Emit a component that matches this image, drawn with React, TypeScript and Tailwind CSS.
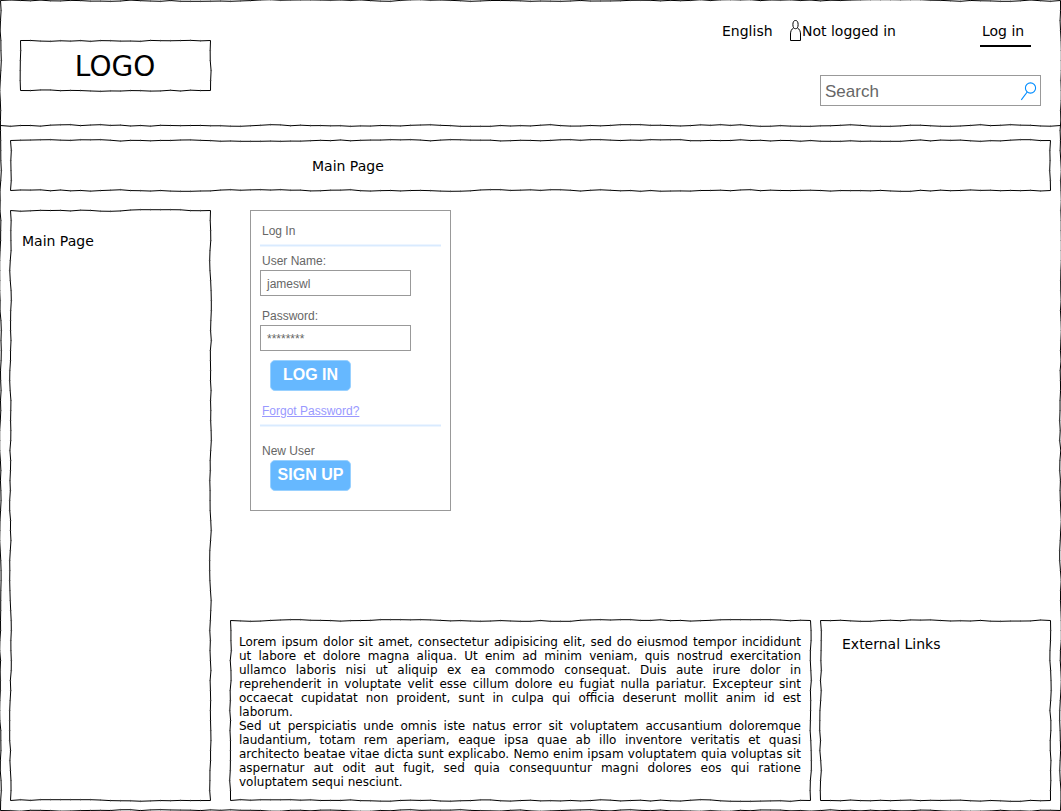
import type { ReactNode } from 'react';

type SketchProps = { width: number; height: number; seed: number; lineAt?: number };

// Offsets follow a damped random walk so neighbouring points stay close together.
function wobble(seed: number) {
  let s = seed * 7919 + 13;
  let last = 0;
  return () => {
    s = (s * 16807) % 2147483647;
    const step = ((s / 2147483647) * 2 - 1) * 0.75;
    last = Math.max(-0.8, Math.min(0.8, last * 0.6 + step));
    return last;
  };
}

function line(length: number, vertical: boolean, fixed: number, rnd: () => number) {
  const points: string[] = [];
  const ticks: string[] = [];
  for (let p = 0; p <= length; p += 10) {
    const end = p === 0 || p >= length;
    const at = p + 0.5;
    const off = fixed + 0.5 + (end ? 0 : rnd());
    points.push(vertical ? `${off} ${at}` : `${at} ${off}`);
    if (!end) ticks.push(vertical ? `M${off - 1} ${at}h2` : `M${at} ${off - 1}v2`);
  }
  if (length % 10) {
    points.push(vertical ? `${fixed + 0.5} ${length + 0.5}` : `${length + 0.5} ${fixed + 0.5}`);
  }
  return { d: `M${points.join('L')}`, ticks: ticks.join('') };
}

function Sketch({ width, height, seed, lineAt }: SketchProps) {
  const rnd = wobble(seed);
  const lines = [
    line(width, false, 0, rnd),
    line(height, true, width, rnd),
    line(width, false, height, rnd),
    line(height, true, 0, rnd),
  ];
  if (lineAt) lines.push(line(width, false, lineAt, rnd));
  return (
    <svg
      className="pointer-events-none absolute top-0 left-0 overflow-visible"
      width={width + 1}
      height={height + 1}
      fill="none"
      stroke="black"
    >
      {lines.map((l, i) => (
        <g key={i}>
          <path d={l.d} />
          <path d={l.ticks} strokeOpacity="0.3" />
        </g>
      ))}
    </svg>
  );
}

function Field({ label, value }: { label: string; value: string }) {
  return (
    <div className="h-[55px]">
      <div className="h-4 pl-0.5">{label}</div>
      <div className="flex h-[26px] w-[151px] items-center border border-[#999] pt-px pl-1.5">{value}</div>
    </div>
  );
}

function Divider() {
  return <div className="h-[3px] w-[181px] border-y border-[#edf5ff] bg-[#d9ebff]" />;
}

function Button({ children }: { children: ReactNode }) {
  return (
    <button className="ml-2.5 flex h-[31px] w-[81px] items-center justify-center rounded-[5px] border border-[#99d1ff] bg-[#66b8ff] pb-px text-base leading-none font-bold text-white">
      {children}
    </button>
  );
}

const lorem = [
  'Lorem ipsum dolor sit amet, consectetur adipisicing elit, sed do eiusmod tempor incididunt',
  'ut labore et dolore magna aliqua. Ut enim ad minim veniam, quis nostrud exercitation',
  'ullamco laboris nisi ut aliquip ex ea commodo consequat. Duis aute irure dolor in',
  'reprehenderit in voluptate velit esse cillum dolore eu fugiat nulla pariatur. Excepteur sint',
  'occaecat cupidatat non proident, sunt in culpa qui officia deserunt mollit anim id est',
  'laborum.',
  'Sed ut perspiciatis unde omnis iste natus error sit voluptatem accusantium doloremque',
  'laudantium, totam rem aperiam, eaque ipsa quae ab illo inventore veritatis et quasi',
  'architecto beatae vitae dicta sunt explicabo. Nemo enim ipsam voluptatem quia voluptas sit',
  'aspernatur aut odit aut fugit, sed quia consequuntur magni dolores eos qui ratione',
  'voluptatem sequi nesciunt.',
];

export default function App() {
  return (
    <div className="relative h-[811px] w-[1061px] overflow-hidden bg-white font-['DejaVu_Sans',sans-serif] text-sm leading-4 text-black">
      <Sketch width={1060} height={810} seed={3} lineAt={125} />

      <header className="flex h-[140px] justify-between pt-5 pr-5 pl-5">
        <div className="relative mt-5 flex h-[51px] w-[191px] items-center justify-center pt-0.5 pr-px text-[28px]">
          <Sketch width={190} height={50} seed={8} />
          LOGO
        </div>
        <div className="flex w-[319px] flex-col items-end">
          <div className="flex h-[55px] w-full items-start">
            <span className="w-[67px] pt-[3px]">English</span>
            <svg className="h-[22px] w-[13px]" viewBox="0 0 13 22" fill="none" stroke="black">
              <ellipse cx="6.5" cy="4.6" rx="2.6" ry="4.1" />
              <path d="M4.6 8C2.4 9 1.5 11.5 1.5 14V20.5H11.5V14C11.5 11.5 10.6 9 8.4 8" />
            </svg>
            <span className="flex-1 pt-[3px] whitespace-nowrap">Not logged in</span>
            <span className="mr-2.5 h-[27px] w-[51px] border-b-2 border-black pt-[3px] pl-0.5">Log in</span>
          </div>
          <div className="flex h-[31px] w-[221px] items-center justify-between border border-[#999] pr-[3px] pl-1 font-['Liberation_Sans',sans-serif] text-[17px] text-[#666]">
            <span className="pt-0.5">Search</span>
            <svg className="h-5 w-[17px]" viewBox="0 0 17 20" fill="none" stroke="#008cff" strokeWidth="1.1">
              <circle cx="10.5" cy="7" r="5.1" />
              <path d="M7.2 11L1.3 18.8" />
            </svg>
          </div>
        </div>
      </header>

      <nav className="relative ml-2.5 flex h-[51px] w-[1041px] items-center pl-[302px]">
        <Sketch width={1040} height={50} seed={21} />
        Main Page
      </nav>

      <div className="mt-[19px] ml-2.5 flex h-[591px]">
        <aside className="relative w-[201px] pt-[23px] pl-3">
          <Sketch width={200} height={590} seed={32} />
          Main Page
        </aside>

        <main className="ml-[19px] flex flex-col justify-between">
          <section className="ml-5 h-[301px] w-[201px] border border-[#999] px-[9px] pt-[13px] font-['Liberation_Sans',sans-serif] text-xs leading-[14px] text-[#666]">
            <div className="h-5 pl-0.5">Log In</div>
            <Divider />
            <div className="h-[116px] pt-[7px]">
              <Field label="User Name:" value="jameswl" />
              <Field label="Password:" value="********" />
            </div>
            <div className="-mt-[3px] h-[31px]">
              <Button>LOG IN</Button>
            </div>
            <div className="mt-[13px] h-5 pl-0.5 text-[#9999ff] underline">Forgot Password?</div>
            <Divider />
            <div className="h-[33px] pt-[17px] pl-0.5">New User</div>
            <Button>SIGN UP</Button>
          </section>

          <div className="flex h-[181px] gap-[9px]">
            <article className="relative w-[581px] pt-[15px] pl-[9px] text-xs leading-[14px]">
              <Sketch width={580} height={180} seed={45} />
              {lorem.map((text, i) => (
                <p
                  key={text}
                  className={
                    i === 5 || i === 10
                      ? 'w-[562px] whitespace-nowrap'
                      : 'w-[562px] text-justify [text-align-last:justify]'
                  }
                >
                  {text}
                </p>
              ))}
            </article>
            <aside className="relative w-[231px] pt-4 pl-[22px]">
              <Sketch width={230} height={180} seed={58} />
              External Links
            </aside>
          </div>
        </main>
      </div>
    </div>
  );
}
